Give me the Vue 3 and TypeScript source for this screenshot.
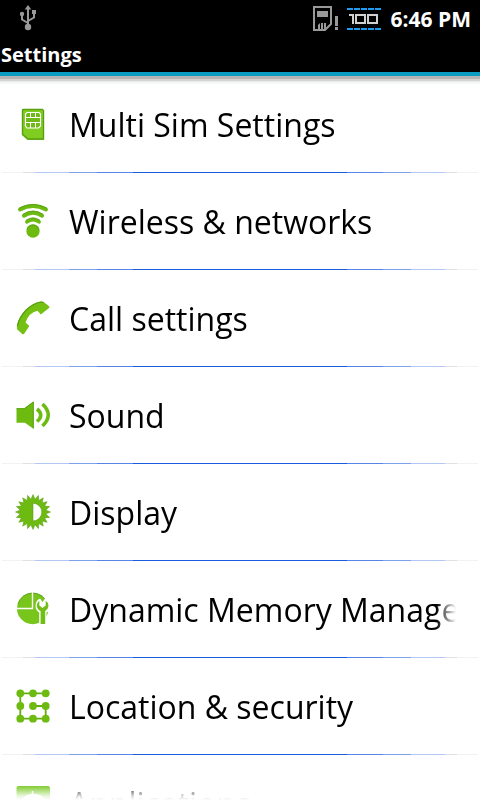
<script setup lang="ts">
interface SettingItem {
  id: string
  label: string
}

const items: SettingItem[] = [
  { id: 'sim', label: 'Multi Sim Settings' },
  { id: 'wireless', label: 'Wireless & networks' },
  { id: 'call', label: 'Call settings' },
  { id: 'sound', label: 'Sound' },
  { id: 'display', label: 'Display' },
  { id: 'memory', label: 'Dynamic Memory Manager' },
  { id: 'location', label: 'Location & security' },
  { id: 'apps', label: 'Applications' },
]

const teeth = 20
const sunPoints: string = Array.from({ length: teeth * 2 }, (_, i) => {
  const radius = i % 2 === 0 ? 17.5 : 13
  const angle = (Math.PI * i) / teeth - Math.PI / 2
  return `${(18 + radius * Math.cos(angle)).toFixed(2)},${(18 + radius * Math.sin(angle)).toFixed(2)}`
}).join(' ')

const dots: [number, number][] = [5.3, 18, 30.7].flatMap((y) =>
  [5.3, 18, 30.7].map((x): [number, number] => [x, y]),
)
</script>

<template>
  <div class="screen">
    <header class="top">
      <div class="status">
        <svg class="usb" width="18" height="28" viewBox="0 0 18 28" aria-hidden="true">
          <g fill="none" stroke="#999" stroke-width="2">
            <path d="M9 4V21M9 18L3 14.500V9M9 16L15 12.500V7" />
          </g>
          <g fill="#999">
            <path d="M9 0L12.300 4.500H5.700Z" />
            <circle cx="9" cy="22" r="3.200" />
            <circle cx="3" cy="9" r="2.200" />
            <rect x="13" y="5" width="4" height="4" />
          </g>
        </svg>
        <div class="indicators">
          <svg width="26" height="26" viewBox="0 0 26 26" aria-hidden="true">
            <path d="M1 1H18V18L12 24H1Z" fill="none" stroke="#999" stroke-width="2" />
            <rect x="4" y="5" width="11" height="6" fill="#999" />
            <path d="M5 24V19L7 17V23H8V17H10V23H11V17H13V22L11 24Z" fill="#999" />
            <path d="M22 10H25V20H22ZM22 21H25V24H22Z" fill="#999" />
          </svg>
          <svg width="34" height="22" viewBox="0 0 34 22" role="img" aria-label="Battery 100">
            <path d="M0 1H34M0 21H34" stroke="#1e9cf0" stroke-width="2" stroke-dasharray="6 1" />
            <g fill="none" stroke="#d0d0d0" stroke-width="2">
              <path d="M2 7H6V16" />
              <rect x="9" y="7" width="9" height="8" />
              <rect x="21" y="7" width="9" height="8" />
            </g>
          </svg>
          <time class="clock">6:46 PM</time>
        </div>
      </div>
      <h1 class="title">Settings</h1>
    </header>
    <main class="content">
      <ul class="list">
        <li v-for="item in items" :key="item.id" class="item">
          <a class="row" :href="'#' + item.id">
            <svg class="icon" width="36" height="36" viewBox="0 0 36 36" aria-hidden="true">
              <template v-if="item.id === 'sim'">
                <path d="M8.500 3H27.500Q29 3 29 4.500V32.500Q29 34 27.500 34H12.500L7 29V4.500Q7 3 8.500 3Z" fill="#80cc20" />
                <path d="M28.500 4V33H13L7.500 28.500V4Q7.500 3.500 8.500 3.500H28" fill="none" stroke="#58a010" stroke-width="1.400" />
                <path d="M12 6.500H24L25.500 8V20L23.500 22H12L10.500 20V8Z" fill="#6fba18" stroke="#fff" stroke-width="1.100" />
                <path d="M10.500 11.500H25.500M10.500 16.500H25.500M15.500 6.500V11.500M20.500 6.500V11.500M15.500 16.500V22M20.500 16.500V22" fill="none" stroke="#fff" />
              </template>
              <template v-else-if="item.id === 'wireless'">
                <g fill="none" stroke="#6dbb10" stroke-width="3.800" stroke-linecap="round">
                  <path d="M5 6.500Q18 -.5 31 6.500" />
                  <path d="M8.800 12.800Q18 6.800 27.200 12.800" />
                  <path d="M12 18.800Q18 14.500 24 18.800" />
                </g>
                <circle cx="18" cy="28" r="6.700" fill="#6dbb10" />
                <path d="M12 26.500A6.300 6.300 0 0 1 24 26.500M4 5.300Q18 -2.500 32 5.300M7.700 11.400Q18 4.700 28.300 11.400M11 17.300Q18 12.400 25 17.300" fill="none" stroke="#509a12" stroke-width=".8" />
              </template>
              <template v-else-if="item.id === 'call'">
                <path d="M26 1.500Q28 .8 34.300 6.500Q34.900 7.300 34 8L25.800 14.500L22.500 10.800Q13.500 13 10.500 22.500L14.300 26L9 34L7.500 34.300L2.300 29.500Q1.500 28.500 2 25.500C4.500 13.500 15 3.500 26 1.500Z" fill="#74c013" />
                <path d="M2.300 26C5 14 15 4 26 2L29 2.500" fill="none" stroke="#569e12" stroke-width="1.200" />
              </template>
              <template v-else-if="item.id === 'sound'">
                <path d="M1.500 11.300H9.300L18.700 4.300V32L10 25.700H1.500Z" fill="#6dbb10" />
                <path d="M1.500 11.700H9.500L18.300 5V31" fill="none" stroke="#509a12" stroke-width=".8" />
                <path d="M22 12Q29.500 18 22 24.500M27.500 7Q39 18 27.500 29" fill="none" stroke="#6dbb10" stroke-width="3.600" />
              </template>
              <template v-else-if="item.id === 'display'">
                <polygon :points="sunPoints" fill="#6dbb10" stroke="#579a18" stroke-width=".5" />
                <path d="M18 9.300A8.800 8.800 0 0 1 18 26.900Z" fill="#fff" stroke="#519516" stroke-width=".5" />
              </template>
              <template v-else-if="item.id === 'memory'">
                <circle cx="17.700" cy="17.500" r="15.700" fill="#78c51c" />
                <path d="M3 13A15.300 15.300 0 0 1 32 12" fill="none" stroke="#579c18" stroke-width=".8" />
                <path d="M17.500 1V17.500H1" fill="none" stroke="#fff" stroke-width="1.400" />
                <path d="M24.200 36V21.500Q20.500 19.500 20.500 14.500Q21 9 25 7.500L27.500 11L30 7.500Q35 9 36 14Q35 20 31.500 21.500V36Z" fill="#fff" />
                <path d="M24.300 9.800V14.500L27.500 17L30.700 14.500V9.800Q33.500 11.500 33.500 15Q33 18.500 30.200 20V33H25.600V20Q22.200 18.500 21.800 15Q21.800 11.500 24.300 9.800Z" fill="#72bd17" />
              </template>
              <template v-else-if="item.id === 'location'">
                <path d="M30.700 5.300H5.300V30.700H30.700V18H18" fill="none" stroke="#64ae12" stroke-width="1.800" />
                <circle v-for="([x, y], i) in dots" :key="i" :cx="x" :cy="y" r="3.900" fill="#6dbb10" />
              </template>
              <template v-else>
                <rect x="1.500" y="1" width="33.500" height="33" rx="2" fill="#6dc410" />
                <path d="M3 30Q4 10 18 9.500T33 30ZM17.500 6V10" fill="#fff" stroke="#fff" stroke-width="1.500" />
              </template>
            </svg>
            <span class="label">{{ item.label }}</span>
          </a>
        </li>
      </ul>
    </main>
  </div>
</template>

<style>
body {
  margin: 0;
  background: #fff;
}
</style>

<style scoped>
.screen {
  display: flex;
  flex-direction: column;
  height: 100vh;
  overflow: hidden;
  background: #fff;
  color: #000;
  font-family: "Open Sans", "Noto Sans", sans-serif;
}

.top {
  flex: none;
  background: #000;
  color: #fff;
  border-bottom: 4px solid #0a9dc4;
}

.status {
  display: flex;
  align-items: center;
  justify-content: space-between;
  height: 38px;
  padding: 0 9px 0 19px;
}

.indicators {
  display: flex;
  align-items: center;
  gap: 8px;
}

.clock {
  margin-left: 2px;
  font-size: 21px;
  font-weight: 700;
  line-height: 38px;
}

.title {
  margin: 0;
  padding: 0 1px;
  font-size: 20px;
  font-weight: 700;
  line-height: 34px;
}

.content {
  position: relative;
  flex: 1;
  min-height: 0;
  overflow: hidden;
}

.content::before,
.content::after {
  content: "";
  position: absolute;
  left: 0;
  right: 0;
  z-index: 1;
  pointer-events: none;
}

.content::before {
  top: 0;
  height: 8px;
  background: linear-gradient(#b4b4b4 0 3px, #d4d4d0 3px 5px, #e8eaec 5px 6px, #f6f7f8 6px 8px);
}

.content::after {
  bottom: 0;
  height: 16px;
  background: linear-gradient(rgba(255, 255, 255, 0), rgba(255, 255, 255, 0.85) 75%, #fff);
}

.list {
  margin: 0;
  padding: 0;
  list-style: none;
}

.item::after {
  content: "";
  display: block;
  height: 1px;
  margin: 0 2px;
  background: linear-gradient(
    90deg,
    #f2f2f2 0 4.5%,
    #e0e0e0 4.5% 7%,
    #b4c8f5 7% 14%,
    #7ea2ea 14% 20%,
    #5585e8 20% 27.5%,
    #1a5ce0 27.5% 72.5%,
    #5585e8 72.5% 80%,
    #7ea2ea 80% 86%,
    #b4c8f5 86% 93%,
    #e0e0e0 93% 95.5%,
    #f2f2f2 95.5%
  );
}

.row {
  display: flex;
  align-items: center;
  gap: 18px;
  height: 96px;
  padding: 0 24px 0 15px;
  color: inherit;
  text-decoration: none;
}

.icon {
  flex: none;
}

.label {
  flex: 1;
  min-width: 0;
  padding-top: 2px;
  overflow: hidden;
  white-space: nowrap;
  font-size: 32px;
  line-height: 48px;
  mask-image: linear-gradient(90deg, #000 calc(100% - 20px), transparent);
}
</style>
